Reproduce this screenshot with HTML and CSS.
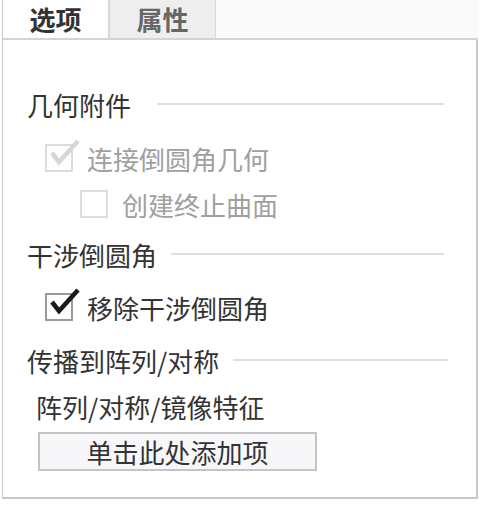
FILE: index.html
```html
<!DOCTYPE html>
<html>
<head>
    <link rel="stylesheet" href="styles.css">
</head>

<body>
    <div class="panel">
        <div class="tabs">
            <div class="tab active">选项</div>
            <div class="tab">属性</div>
        </div>

        <div class="content">
            <div class="group-title first">
                <span>几何附件</span>
                <span class="rule"></span>
            </div>

            <div class="check-row disabled row-attach">
                <span class="box checked">
                    <svg viewBox="0 0 34 32"><path d="M5 15 L12 24 L31 3" fill="none" stroke="currentColor" stroke-width="4.5" stroke-linejoin="miter"/></svg>
                </span>
                <span class="label">连接倒圆角几何</span>
            </div>

            <div class="check-row disabled sub row-end">
                <span class="box"></span>
                <span class="label">创建终止曲面</span>
            </div>

            <div class="group-title row-interfere">
                <span>干涉倒圆角</span>
                <span class="rule"></span>
            </div>

            <div class="check-row row-remove">
                <span class="box checked">
                    <svg viewBox="0 0 34 32"><path d="M5 15 L12 24 L31 3" fill="none" stroke="currentColor" stroke-width="4.5" stroke-linejoin="miter"/></svg>
                </span>
                <span class="label">移除干涉倒圆角</span>
            </div>

            <div class="group-title row-pattern">
                <span>传播到阵列/对称</span>
                <span class="rule"></span>
            </div>

            <div class="field-label">阵列/对称/镜像特征</div>
            <button class="add-item">单击此处添加项</button>
        </div>
    </div>
</body>
</html>
```

FILE: styles.css
```css
:root {
    --text: #333;
    --text-muted: #a0a0a0;
    --border: #c8c8c8;
    --rule: #dedede;
    --tab-bg: #f9f9f9;
}

body {
    margin: 0;
    background: white;
    font-family: "Noto Sans CJK SC", "Noto Sans", sans-serif;
    color: var(--text);
}

.panel {
    width: 475px;
    margin-left: 2px;
    border-left: 1px solid var(--border);
}

.tabs {
    display: flex;
    height: 38px;
    background: var(--tab-bg);
    border-bottom: 2px solid #d4d4d4;
}

.tab {
    width: 105px;
    font-size: 26px;
    font-weight: 700;
    line-height: 38px;
    text-align: center;
    color: #666;
    background: #eeeeee;
    border-right: 1px solid #d8d8d8;
}

.tab.active {
    color: #333;
    background: white;
    border-right: 2px solid #d8d8d8;
}

.content {
    height: 459px;
    border-right: 2px solid var(--border);
    border-bottom: 2px solid var(--border);
    padding-left: 24px;
    box-sizing: border-box;
}

.group-title {
    display: flex;
    align-items: center;
    height: 36px;
    font-size: 26px;
    padding-right: 32px;
}

.group-title .rule {
    flex: 1;
    height: 2px;
    margin-left: 14px;
    background: var(--rule);
}

.group-title.first { padding-top: 46px; }
.group-title.first .rule { margin-left: 26px; }

.check-row {
    display: flex;
    align-items: center;
    height: 36px;
    padding-left: 18px;
    font-size: 26px;
}

.check-row.sub { padding-left: 53px; }

.row-attach { margin-top: 18px; }
.row-end { margin-top: 10px; }
.row-interfere { margin-top: 14px; }
.row-remove { margin-top: 17px; }
.row-pattern { margin-top: 17px; padding-right: 28px; }

.box {
    position: relative;
    width: 24px;
    height: 24px;
    border: 2px solid #9a9a9a;
    background: white;
    margin-right: 14px;
    flex-shrink: 0;
}

.box svg {
    position: absolute;
    left: 0;
    top: -8px;
    width: 34px;
    height: 32px;
    color: #1a1a1a;
}

.disabled .box {
    border-color: #dcdcdc;
}

.disabled .box svg {
    color: #d6d6d6;
}

.disabled .label {
    color: var(--text-muted);
}

.field-label {
    height: 36px;
    line-height: 36px;
    margin-top: 11px;
    padding-left: 9px;
    font-size: 26px;
}

.add-item {
    display: block;
    width: 279px;
    height: 39px;
    margin: 7px 0 0 11px;
    padding: 0;
    border: 2px solid #c4c4c4;
    background: #f7f7fa;
    color: #333;
    font-family: inherit;
    font-size: 26px;
    line-height: 33px;
}
```
